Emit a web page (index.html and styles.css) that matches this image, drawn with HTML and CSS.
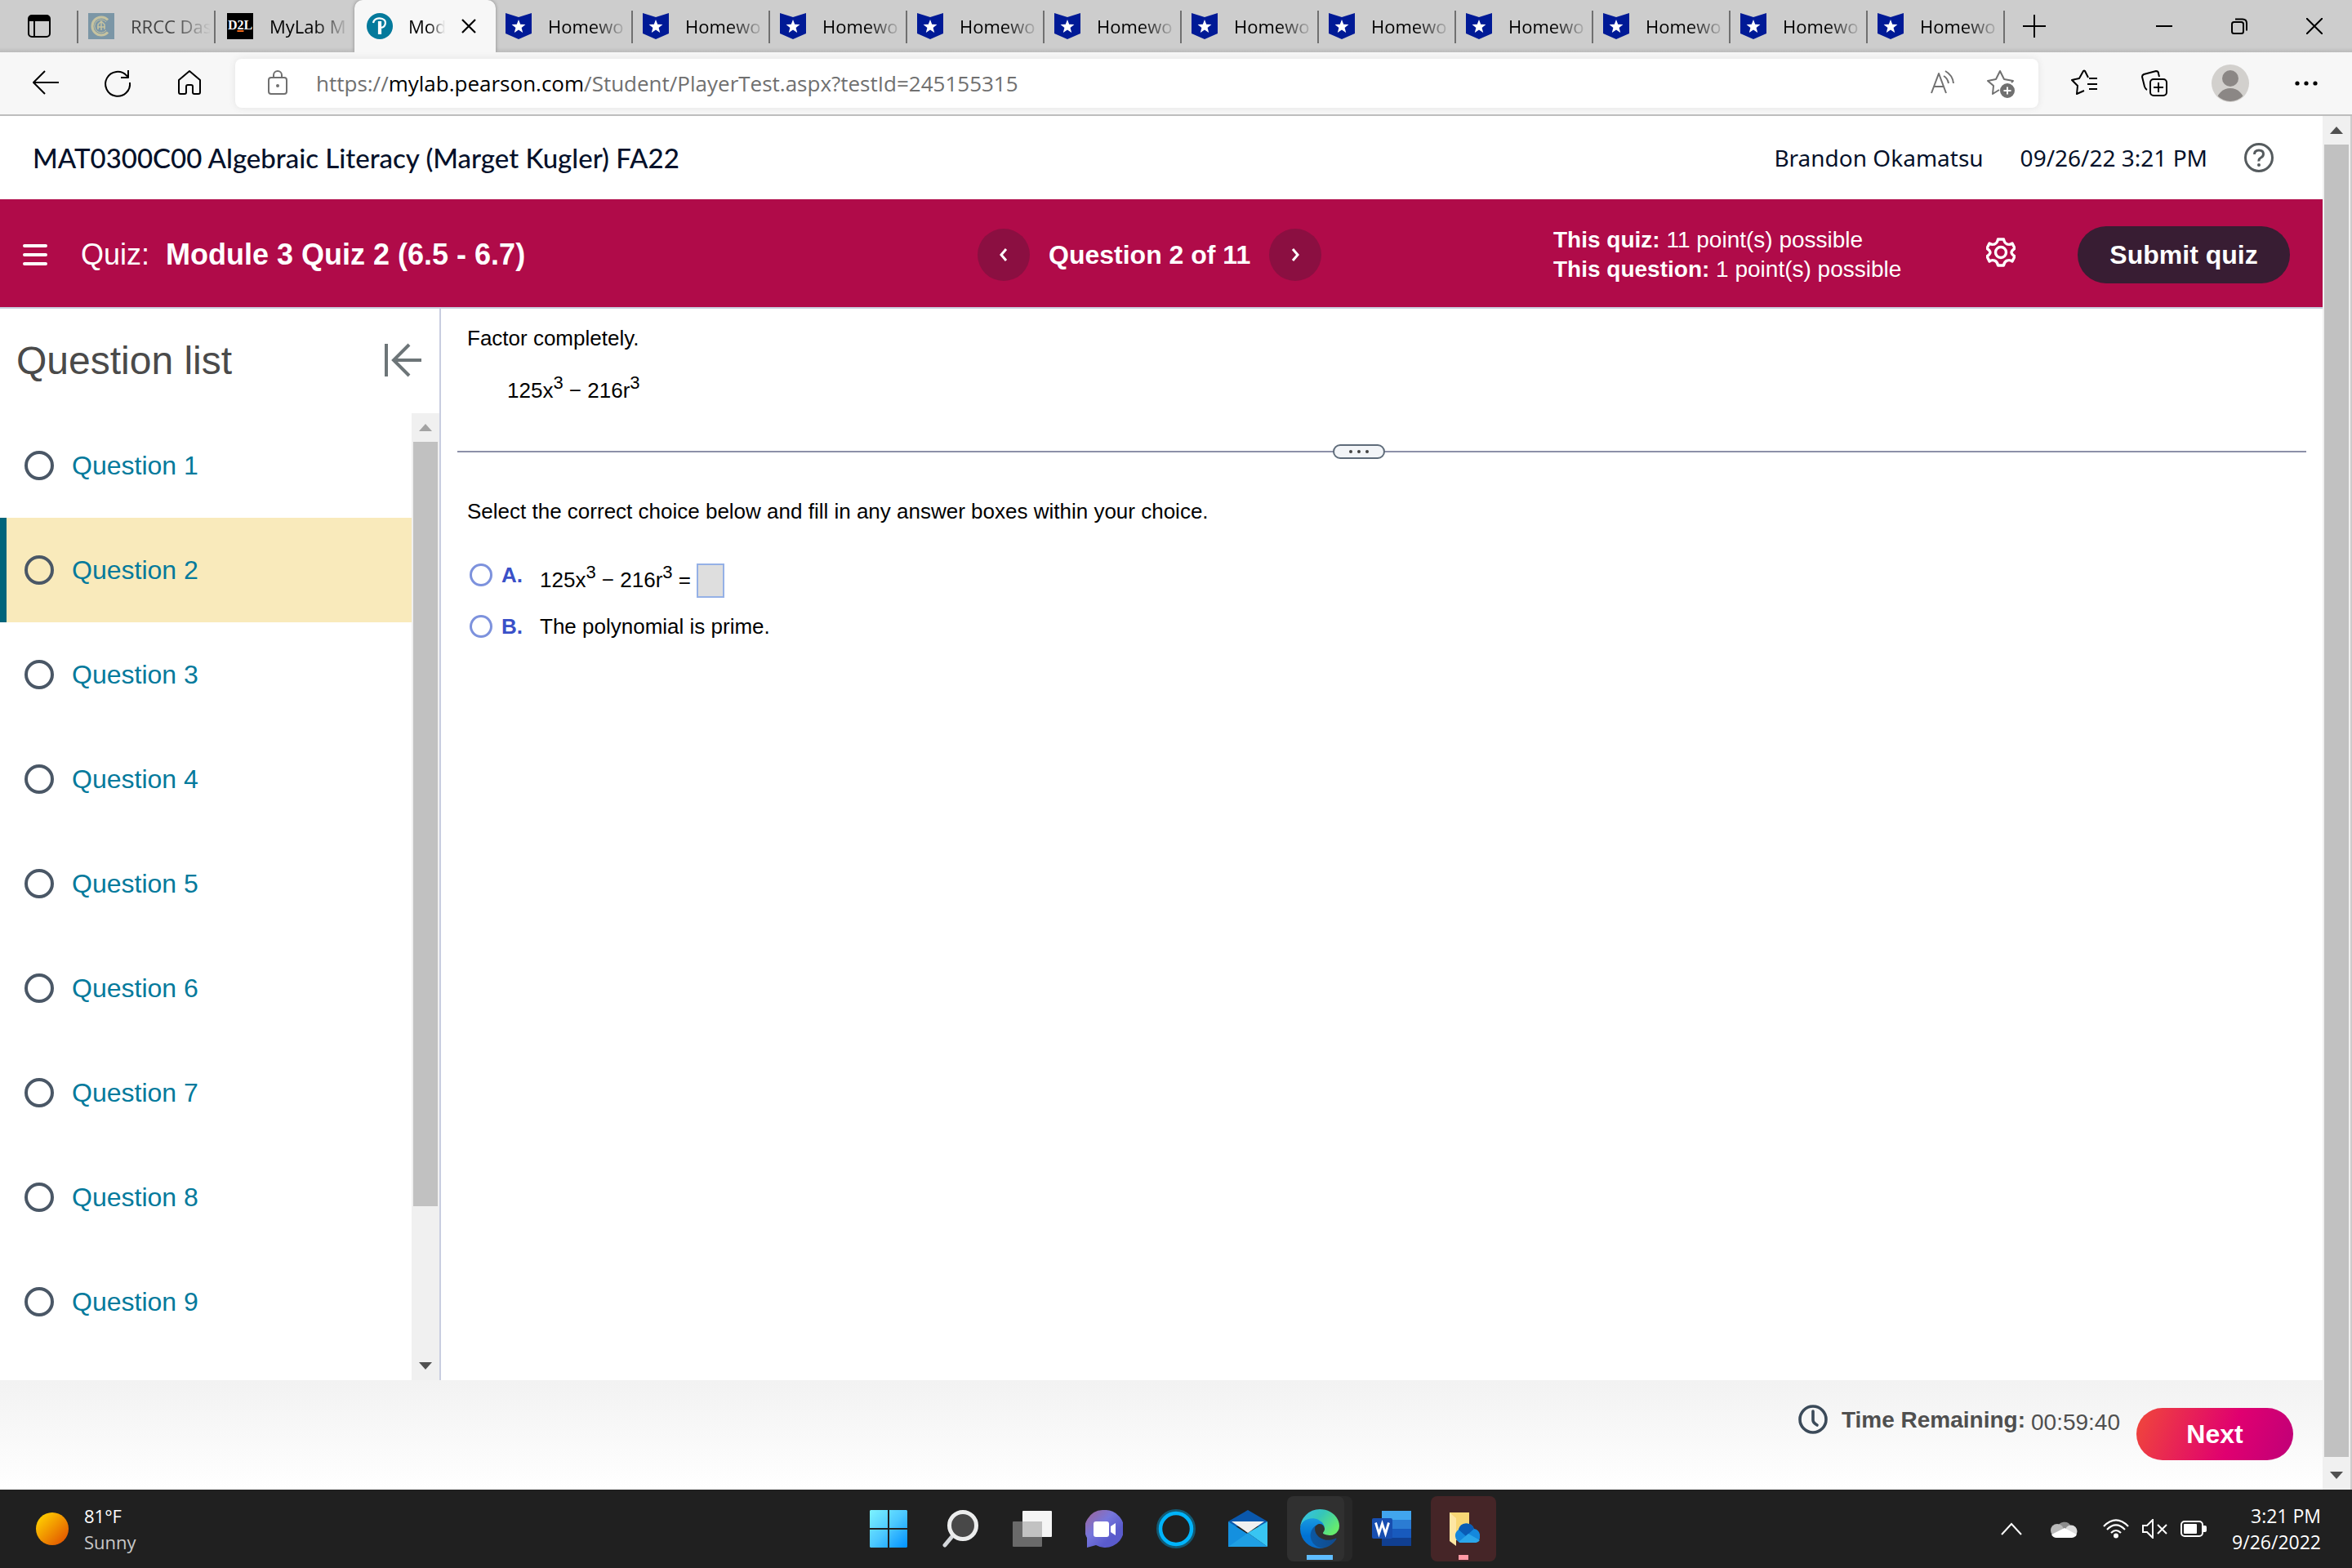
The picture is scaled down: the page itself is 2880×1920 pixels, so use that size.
FILE: index.html
```html
<!DOCTYPE html>
<html lang="en">
<head>
<meta charset="utf-8">
<title>Module 3 Quiz 2 (6.5 - 6.7)</title>
<link rel="stylesheet" href="styles.css">
</head>
<body>
<svg class="defs" aria-hidden="true">
  <symbol id="badge" viewBox="0 0 32 32"><path d="M0 0L16 5L32 0V25L16 32L0 25Z" fill="#001a96"/><path d="M16 8l2.200 5.800 6.200.3-4.800 3.900 1.600 6-5.200-3.400-5.200 3.400 1.600-6-4.800-3.900 6.200-.3z" fill="#fff"/></symbol>
  <symbol id="up" viewBox="0 0 16 9"><path d="M8 0L16 9H0Z" fill="currentColor"/></symbol>
  <symbol id="down" viewBox="0 0 16 9"><path d="M0 0H16L8 9Z" fill="currentColor"/></symbol>
  <symbol id="ring" viewBox="0 0 36 36"><circle cx="18" cy="18" r="16" fill="none" stroke="#4a5766" stroke-width="4"/></symbol>
</svg>

<header class="tabbar">
  <button class="tab-menu" aria-label="Tab actions"><svg width="28" height="28" viewBox="0 0 28 28"><rect x="1" y="1" width="26" height="26" rx="4" fill="none" stroke="#000" stroke-width="2"/><path d="M1 8V5q0-4 4-4h18q4 0 4 4v3z"/><path d="M8 8v19" stroke="#000" stroke-width="2"/></svg></button>
  <nav class="tabs" aria-label="Tabs">
    <a href="#" class="tab dim"><svg class="fav" viewBox="0 0 32 32"><rect width="32" height="32" fill="#7b96a6"/><g fill="none" stroke="#c6c3a0"><path d="M24 8.500A11 11 0 1 0 24 23.500" stroke-width="3"/><path d="M22 11A8 8 0 1 0 22 21" stroke-width="1"/><path d="M12 20v-6l4-4 4 4v6M16 11v10M11 17h10" stroke-width="1.500"/></g></svg><span>RRCC Das</span></a>
    <a href="#" class="tab"><span class="d2l">D<u>2</u>L</span><span>MyLab M</span></a>
    <a href="#" class="tab active"><svg class="fav" viewBox="0 0 32 32"><circle cx="16" cy="16" r="16" fill="#047a9c"/><path d="M8 12C9 7 14 5.500 19 7c6 2 5 11-3 11M15 10v16M17 10v16" fill="none" stroke="#fff" stroke-width="2.200"/></svg><span>Mod</span><svg class="close" width="18" height="18" viewBox="0 0 18 18"><path d="M1 1L17 17M17 1L1 17" stroke="#000" stroke-width="2.200"/></svg></a>
    <a href="#" class="tab"><svg class="fav"><use href="#badge"/></svg><span>Homewo</span></a>
    <a href="#" class="tab"><svg class="fav"><use href="#badge"/></svg><span>Homewo</span></a>
    <a href="#" class="tab"><svg class="fav"><use href="#badge"/></svg><span>Homewo</span></a>
    <a href="#" class="tab"><svg class="fav"><use href="#badge"/></svg><span>Homewo</span></a>
    <a href="#" class="tab"><svg class="fav"><use href="#badge"/></svg><span>Homewo</span></a>
    <a href="#" class="tab"><svg class="fav"><use href="#badge"/></svg><span>Homewo</span></a>
    <a href="#" class="tab"><svg class="fav"><use href="#badge"/></svg><span>Homewo</span></a>
    <a href="#" class="tab"><svg class="fav"><use href="#badge"/></svg><span>Homewo</span></a>
    <a href="#" class="tab"><svg class="fav"><use href="#badge"/></svg><span>Homewo</span></a>
    <a href="#" class="tab"><svg class="fav"><use href="#badge"/></svg><span>Homewo</span></a>
    <a href="#" class="tab"><svg class="fav"><use href="#badge"/></svg><span>Homewo</span></a>
  </nav>
  <button class="new-tab" aria-label="New tab"><svg width="28" height="28" viewBox="0 0 28 28"><path d="M0 14H28M14 0V28" stroke="#000" stroke-width="2"/></svg></button>
  <div class="window-controls">
    <button aria-label="Minimize"><svg width="20" height="20" viewBox="0 0 20 20"><path d="M0 10H20" stroke="#000" stroke-width="2"/></svg></button>
    <button aria-label="Restore"><svg width="20" height="20" viewBox="0 0 20 20"><g fill="none" stroke="#000" stroke-width="2"><rect x="1" y="5" width="14" height="14" rx="2.500"/><path d="M5 1.500h9q5 0 5 5v9"/></g></svg></button>
    <button aria-label="Close"><svg width="20" height="20" viewBox="0 0 20 20"><path d="M0 0L20 20M20 0L0 20" stroke="#000" stroke-width="2"/></svg></button>
  </div>
</header>

<div class="toolbar">
  <div class="nav-buttons">
    <button aria-label="Back"><svg class="ic" viewBox="0 0 32 32"><path d="M32 15H1M15 1L1 15L15 29"/></svg></button>
    <button aria-label="Refresh"><svg class="ic" viewBox="0 0 32 32"><path d="M31 15a15 15 0 1 1-4-8.500L29 9M29 0v9h-9"/></svg></button>
    <button aria-label="Home"><svg class="ic" viewBox="0 0 32 32"><path d="M16 1L29 12v15q0 2-2 2h-5q-2 0-2-2v-7q0-2-2-2h-4q-2 0-2 2v7q0 2-2 2H5q-2 0-2-2V12z"/></svg></button>
  </div>
  <div class="address">
    <svg class="ic grey" viewBox="0 0 32 32"><rect x="5" y="9" width="22" height="20" rx="3"/><path d="M11 9V6a5 5 0 0 1 10 0v3"/><circle cx="16" cy="19" r="1" fill="#666"/></svg>
    <div class="url" role="textbox" aria-label="Address">https://<b>mylab.pearson.com</b>/Student/PlayerTest.aspx?testId=245155315</div>
    <button aria-label="Read aloud"><svg class="ic grey" viewBox="0 0 32 32"><path d="M3 28L12 4L21 28M6 20h12M18 7q5 3 6 9M20 1q9 5 10 15"/></svg></button>
    <button aria-label="Add to favorites"><svg class="ic grey" viewBox="0 0 32 32"><path d="M14 24l-8 5 1-10-7-6 10-2 5-10 5 10 11 2-2 2"/><circle cx="24" cy="25" r="8" fill="#707070"/><path d="M24 20.500v9M19.500 25h9" stroke="#fff"/></svg></button>
  </div>
  <div class="tools">
    <button aria-label="Favorites"><svg class="ic" viewBox="0 0 32 32"><path d="M16 25l-9 4 1-10-7-7 9-2 5-9q1-1 2 0l4 8M22 10h10M20 17h12M22 23h10"/></svg></button>
    <button aria-label="Collections"><svg class="ic" viewBox="0 0 32 32"><rect x="11" y="11" width="20" height="20" rx="4"/><path d="M21 15v12M15 21h12M7 24q-2-1-3-4L1 8q0-2 2-3L18 1q3 0 3 3l1 4"/></svg></button>
    <button aria-label="Profile"><svg width="46" height="46" viewBox="0 0 46 46"><clipPath id="av"><circle cx="23" cy="23" r="22"/></clipPath><circle cx="23" cy="23" r="23" fill="#d2d0cd"/><g clip-path="url(#av)" fill="#8b8785"><circle cx="23" cy="17" r="10"/><circle cx="23" cy="46" r="17"/></g></svg></button>
    <button aria-label="More"><svg class="ic" viewBox="0 0 32 32"><g fill="#000" stroke="none"><circle cx="5" cy="16" r="2.600"/><circle cx="16" cy="16" r="2.600"/><circle cx="27" cy="16" r="2.600"/></g></svg></button>
  </div>
</div>

<div class="viewport">
  <div class="page">
    <div class="course">
      <h1>MAT0300C00 Algebraic Literacy (Marget Kugler) FA22</h1>
      <span>Brandon Okamatsu</span>
      <span>09/26/22 3:21 PM</span>
      <button aria-label="Help"><svg width="36" height="36" viewBox="0 0 36 36"><g fill="none" stroke="#555b5e" stroke-width="3"><circle cx="18" cy="18" r="16.500"/><path d="M12.500 14q0-5 5.500-5t5.500 4.500q0 3-3 4.500t-2.500 4.500"/></g><circle cx="18" cy="27" r="2" fill="#555b5e"/></svg></button>
    </div>

    <div class="banner">
      <div class="quiz-name">
        <button aria-label="Menu"><svg width="30" height="26" viewBox="0 0 30 26"><path d="M2 2H28M2 13H28M2 24H28" stroke="#fff" stroke-width="4" stroke-linecap="round"/></svg></button>
        <p>Quiz:&nbsp; <b>Module 3 Quiz 2 (6.5 - 6.7)</b></p>
      </div>
      <div class="pager">
        <button aria-label="Previous question"><svg width="10" height="16" viewBox="0 0 10 16"><path d="M8 1L2 8L8 15" fill="none" stroke="#fff" stroke-width="3"/></svg></button>
        <b>Question 2 of 11</b>
        <button aria-label="Next question"><svg width="10" height="16" viewBox="0 0 10 16"><path d="M2 1L8 8L2 15" fill="none" stroke="#fff" stroke-width="3"/></svg></button>
      </div>
      <div class="banner-end">
        <div class="points"><p><b>This quiz:</b> 11 point(s) possible</p><p><b>This question:</b> 1 point(s) possible</p></div>
        <button class="gear" aria-label="Settings"><svg width="36" height="36" viewBox="0 0 36 36"><g fill="none" stroke="#fff" stroke-width="3.400" stroke-linejoin="round"><path d="M14.500 2h7q1 5 4.500 6 3 1 6-1l3 6q-4 3-4 5t4 5l-3 6q-3-2-6-1-3.500 1-4.500 6h-7q-1-5-4.500-6-3-1-6 1l-3-6q4-3 4-5t-4-5l3-6q3 2 6 1 3.500-1 4.500-6z"/><circle cx="18" cy="18" r="6.500"/></g></svg></button>
        <button class="submit">Submit quiz</button>
      </div>
    </div>

    <div class="work">
      <aside class="sidebar">
        <div class="side-head"><h2>Question list</h2><button aria-label="Collapse list"><svg width="46" height="42" viewBox="0 0 46 42"><path d="M3 1V41M46 21H12M31 2L12 21L31 40" fill="none" stroke="#6d7578" stroke-width="4"/></svg></button></div>
        <div class="side-scroll">
          <ul>
            <li><a href="#"><svg class="ring"><use href="#ring"/></svg>Question 1</a></li>
            <li><a href="#" class="current"><svg class="ring"><use href="#ring"/></svg>Question 2</a></li>
            <li><a href="#"><svg class="ring"><use href="#ring"/></svg>Question 3</a></li>
            <li><a href="#"><svg class="ring"><use href="#ring"/></svg>Question 4</a></li>
            <li><a href="#"><svg class="ring"><use href="#ring"/></svg>Question 5</a></li>
            <li><a href="#"><svg class="ring"><use href="#ring"/></svg>Question 6</a></li>
            <li><a href="#"><svg class="ring"><use href="#ring"/></svg>Question 7</a></li>
            <li><a href="#"><svg class="ring"><use href="#ring"/></svg>Question 8</a></li>
            <li><a href="#"><svg class="ring"><use href="#ring"/></svg>Question 9</a></li>
          </ul>
          <div class="scrollbar side-bar"><svg class="arrow off"><use href="#up"/></svg><div class="track"><div class="thumb"></div></div><svg class="arrow"><use href="#down"/></svg></div>
        </div>
      </aside>

      <main class="question">
        <p>Factor completely.</p>
        <p class="math prompt">125x<sup>3</sup> − 216r<sup>3</sup></p>
        <div class="divider"><button aria-label="Resize"><svg width="26" height="6" viewBox="0 0 26 6"><g fill="#444"><circle cx="3" cy="3" r="2"/><circle cx="13" cy="3" r="2"/><circle cx="23" cy="3" r="2"/></g></svg></button></div>
        <p>Select the correct choice below and fill in any answer boxes within your choice.</p>
        <div class="choices">
          <div class="choice"><input type="radio" name="choice" id="a"><label for="a"><b>A.</b></label><span class="math">125x<sup>3</sup> − 216r<sup>3</sup> =</span><input type="text" class="answer" aria-label="Answer for choice A"></div>
          <div class="choice"><input type="radio" name="choice" id="b"><label for="b"><b>B.</b>The polynomial is prime.</label></div>
        </div>
      </main>
    </div>

    <footer class="quiz-foot">
      <svg width="36" height="36" viewBox="0 0 36 36"><g fill="none" stroke="#3b4a59" stroke-width="3.600"><circle cx="18" cy="18" r="16"/><path d="M18 8v11q0 3 5 6" stroke-linecap="round"/></g></svg>
      <b>Time Remaining:</b>
      <span>00:59:40</span>
      <button>Next</button>
    </footer>
  </div>
  <div class="scrollbar page-bar"><svg class="arrow"><use href="#up"/></svg><div class="track"><div class="thumb"></div></div><svg class="arrow"><use href="#down"/></svg></div>
</div>

<div class="taskbar">
  <div class="weather">
    <svg width="40" height="40" viewBox="0 0 40 40"><defs><linearGradient id="sun" x1="0" y1="0" x2="1" y2="1"><stop offset=".1" stop-color="#ffd000"/><stop offset=".9" stop-color="#e25600"/></linearGradient></defs><circle cx="20" cy="20" r="20" fill="url(#sun)"/></svg>
    <p>81°F<br><span>Sunny</span></p>
  </div>
  <div class="apps">
    <button aria-label="Start"><svg width="46" height="46" viewBox="0 0 46 46"><defs><linearGradient id="win" x1="0" y1="0" x2="1" y2="1"><stop stop-color="#7df3ff"/><stop offset=".5" stop-color="#4cc8ff"/><stop offset="1" stop-color="#0091ff"/></linearGradient></defs><path d="M1 0H22V22H0V1zM24 0H45L46 1V22H24zM0 24H22V46H1L0 45zM24 24H46V45L45 46H24z" fill="url(#win)"/></svg></button>
    <button aria-label="Search"><svg width="46" height="46" viewBox="0 0 46 46"><path d="M14 31L4 43" stroke="#d4d7db" stroke-width="5" stroke-linecap="round"/><circle cx="26" cy="19" r="16.500" fill="#484848" stroke="#eceded" stroke-width="5"/></svg></button>
    <button aria-label="Task view"><svg width="48" height="46" viewBox="0 0 48 46"><rect y="14" width="36" height="31" rx="1" fill="#6a6a6a"/><rect x="12" y="1" width="36" height="32" rx="1" fill="#f5f5f5"/><rect x="12" y="14" width="24" height="19" fill="#c2c2c2"/></svg></button>
    <button aria-label="Chat"><svg width="46" height="46" viewBox="0 0 46 46"><defs><linearGradient id="chat" x1="0" y1="0" x2="1" y2="1"><stop offset=".1" stop-color="#9768a4"/><stop offset=".4" stop-color="#7676dc"/><stop offset=".7" stop-color="#5a5bcc"/></linearGradient></defs><path d="M23 0A23 23 0 1 1 13 43L2 46V34A23 23 0 0 1 23 0z" fill="url(#chat)"/><rect x="10" y="14" width="19" height="19" rx="3" fill="#fff"/><path d="M31 20L37 16V31L31 27z" fill="#fff"/></svg></button>
    <button aria-label="Cortana"><svg width="48" height="48" viewBox="0 0 48 48"><circle cx="24" cy="24" r="22" fill="none" stroke="#135a74" stroke-width="4"/><circle cx="24" cy="24" r="19" fill="none" stroke="#00b4fb" stroke-width="4.500"/></svg></button>
    <button aria-label="Mail"><svg width="48" height="46" viewBox="0 0 48 46"><path d="M0 14L24 0L48 14L40 20H8z" fill="#0a58ad"/><path d="M0 14L48 45H0z" fill="#1490df"/><path d="M48 14V45L24 28z" fill="#38c5f2"/><path d="M24 28L48 45H0z" fill="#1f9fe4"/><path d="M4 14H44L24 28z" fill="#f0f0f0"/></svg></button>
    <button class="edge" aria-label="Edge"><svg width="48" height="48" viewBox="0 0 256 256"><defs><linearGradient id="e1" x1="0" x2="1"><stop stop-color="#0c59a4"/><stop offset="1" stop-color="#114a8b"/></linearGradient><linearGradient id="e2" x1="0" y1="0" x2="0" y2="1"><stop stop-color="#1b9de2"/><stop offset=".6" stop-color="#0073d5"/><stop offset="1" stop-color="#0a6cc8"/></linearGradient><linearGradient id="e3" x1="0" y1="0" x2="1" y2=".6"><stop stop-color="#35c1f1"/><stop offset=".5" stop-color="#36c6b8"/><stop offset="1" stop-color="#66eb6e"/></linearGradient></defs><path fill="url(#e1)" d="M231 190.500c-3.400 1.800-6.900 3.400-10.500 4.700a101.700 101.700 0 0 1-35.900 6.500c-47.300 0-88.500-32.500-88.500-74.300a31.500 31.500 0 0 1 16.400-27.300c-42.800 1.800-53.800 46.400-53.800 72.500 0 74 68.100 81.400 82.800 81.400 7.900 0 19.800-2.300 27-4.600l1.300-.4a128.300 128.300 0 0 0 66.600-52.800 4 4 0 0 0-5.400-5.700z"/><path fill="url(#e2)" d="M105.700 241.400a79.200 79.200 0 0 1-22.700-21.300 80.700 80.700 0 0 1 29.500-120c3.200-1.500 8.500-4.100 15.600-4a32.400 32.400 0 0 1 25.700 13 31.900 31.900 0 0 1 6.300 18.700c0-.2 24.500-79.600-80-79.600-43.900 0-80 41.600-80 78.200a130.200 130.200 0 0 0 12.100 56 128 128 0 0 0 156.400 67 75.500 75.500 0 0 1-62.800-8z"/><path fill="url(#e3)" d="M152.300 148.900c-.9 1-3.400 2.500-3.400 5.600 0 2.600 1.700 5.200 4.800 7.300 14.300 10 41.400 8.600 41.500 8.600a59.600 59.600 0 0 0 30.300-8.300 61.400 61.400 0 0 0 30.400-52.900c.3-22.400-8-37.300-11.300-43.900C223.500 23.900 177.700 0 128 0A128 128 0 0 0 0 126.200c.5-36.500 36.800-66 80-66 3.500 0 23.500.3 42 10a72.600 72.600 0 0 1 30.900 29.300c6.100 10.600 7.200 24.100 7.200 29.500s-2.700 13.300-7.800 19.900z"/></svg></button>
    <button aria-label="Word"><svg width="48" height="44" viewBox="0 0 48 44"><path d="M12 0H48V11H12z" fill="#41a5ee"/><path d="M12 11H48V22H12z" fill="#2b7cd3"/><path d="M12 22H48V33H12z" fill="#185abd"/><path d="M12 33H48V43H12z" fill="#103f91"/><rect y="9" width="25" height="25" rx="2" fill="#174eb0"/><path d="M4.500 14.500L8.500 28L12.500 15.500L16.500 28L20.500 14.500" fill="none" stroke="#fff" stroke-width="2.800"/></svg></button>
    <button class="files" aria-label="File Explorer"><svg width="40" height="44" viewBox="0 0 40 44"><path d="M3 2H27V36H3z" fill="#f8d775"/><path d="M3 2L11 9V43L3 37z" fill="#fde6a3"/><path d="M16 39A9 9 0 0 1 14 23A10 10 0 0 1 33 22A9 9 0 0 1 35 39z" fill="#1488dd"/><path d="M14 23A10 10 0 0 1 33 22L23 31z" fill="#0a5cb5"/><path d="M14 38L26 28L40 36Q38 39 35 39H16z" fill="#2aa6ea"/></svg></button>
  </div>
  <div class="tray">
    <svg width="28" height="16" viewBox="0 0 28 16"><path d="M2 15L14 2L26 15" fill="none" stroke="#fff" stroke-width="2"/></svg>
    <svg class="cloud" width="34" height="22" viewBox="0 0 34 22"><path d="M9 10A9 9 0 0 1 26 8L17 14z" fill="#8c8c8c"/><circle cx="9" cy="13" r="8" fill="#b9b9b9"/><circle cx="26" cy="14" r="7.500" fill="#dcdcdc"/><path d="M2 18L18 10L33 18Q31 22 27 22H8Q4 22 2 18z" fill="#fff"/></svg>
    <svg width="32" height="24" viewBox="0 0 32 24"><g fill="none" stroke="#fff" stroke-width="2.200"><path d="M1 9Q16-6 31 9M5 13Q16 2 27 13M10 17Q16 11 22 17"/></g><circle cx="16" cy="20.500" r="3" fill="#fff"/></svg>
    <svg width="32" height="24" viewBox="0 0 32 24"><g fill="none" stroke="#fff" stroke-width="2"><path d="M2 8H7L14 1V23L7 16H2zM20 7L31 18M31 7L20 18"/></g></svg>
    <svg width="34" height="20" viewBox="0 0 34 20"><rect x="2" y="1" width="26" height="18" rx="4" fill="none" stroke="#fff" stroke-width="2"/><rect x="5" y="4" width="16" height="12" rx="1" fill="#fff"/><path d="M29 6h2q2 0 2 2v4q0 2-2 2h-2z" fill="#fff"/></svg>
    <p>3:21 PM<br>9/26/2022</p>
  </div>
</div>
</body>
</html>
```
FILE: styles.css
```css
* { box-sizing: border-box; margin: 0; padding: 0; }
html { font-family: "Liberation Sans", Arial, sans-serif; }
body { display: flex; flex-direction: column; min-height: 100vh; background: #fff; color: #000; }
button { border: 0; background: none; font: inherit; color: inherit; display: flex; align-items: center; justify-content: center; }
a { color: inherit; text-decoration: none; }
svg { display: block; flex: none; }
.defs { position: absolute; width: 0; height: 0; }

/* browser tabs */
.tabbar { display: flex; height: 64px; background: linear-gradient(#cdcdcd 58px, #bbb); font-family: "Open Sans", sans-serif; font-size: 22px; }
.tab-menu { width: 94px; padding-left: 2px; padding-right: 0; }
.tabs { display: flex; }
.tab { display: flex; align-items: center; gap: 20px; width: 168px; padding-left: 12px;
  background: linear-gradient(#707070, #707070) right 13px / 2px 40px no-repeat; }
.tab:first-child { width: 170px; padding-left: 14px; background: linear-gradient(#707070, #707070) left 13px / 2px 40px no-repeat, linear-gradient(#707070, #707070) right 13px / 2px 40px no-repeat; }
.tab:nth-child(2) { width: 170px; padding-left: 14px; background: none; }
.tab.active { width: 173px; padding-left: 15px; background: #f7f7f7; border-radius: 10px 10px 0 0; box-shadow: 0 0 4px #888; gap: 19px; }
.fav { width: 32px; height: 32px; }
.tab > span:last-of-type { flex: 0 0 100px; white-space: nowrap; mask-image: linear-gradient(90deg, #000 55%, transparent 98%); }
.tab.active > span:last-of-type { flex: 0 0 46px; }
.tab.dim { color: #444; }
.tab .d2l { flex: 0 0 32px; height: 32px; background: #000; color: #fff; font: bold 16px/30px "Liberation Serif", serif; text-align: center; }
.d2l u { text-decoration-color: #f26b1d; text-decoration-thickness: 2px; }
.new-tab { width: 72px; margin-right: auto; }
.window-controls { display: flex; }
.window-controls button { width: 92px; }

/* browser toolbar */
.toolbar { display: flex; align-items: center; gap: 40px; height: 78px; padding: 0 40px; background: #f7f7f7; border-bottom: 2px solid #bdbdbd; }
.ic { width: 32px; height: 32px; fill: none; stroke: #000; stroke-width: 2; stroke-linejoin: round; overflow: visible; }
.ic.grey { stroke: #707070; }
.nav-buttons { display: flex; gap: 56px; }
.address { flex: 1; display: flex; align-items: center; gap: 40px; height: 60px; padding: 0 30px 0 36px; background: #fff; border-radius: 8px; box-shadow: 0 0 8px #e2e2e2; }
.url { flex: 1; margin-left: -9px; color: #707070; font: 26px/36px "Open Sans", sans-serif; white-space: nowrap; }
.url b { font-weight: 400; color: #000; }
.tools { display: flex; align-items: center; gap: 54px; }

/* page frame */
.viewport { flex: 1; display: flex; }
.page { flex: 1; display: flex; flex-direction: column; min-width: 0; }
.scrollbar { display: flex; flex-direction: column; width: 36px; background: #f0f0f0; padding: 0 4px 0 2px; }
.page-bar { border-right: 2px solid #ccc; padding-right: 2px; }
.arrow { width: 16px; height: 9px; margin: 13px auto; color: #505050; }
.arrow.off { color: #a3a3a3; }
.track { flex: 1; display: grid; grid-template-rows: 997fr 3fr; }
.thumb { background: #c1c1c1; }

.course { display: flex; align-items: center; height: 102px; padding: 0 60px 0 40px; color: #05112a; font: 28px/40px "Noto Sans", sans-serif; }
.course h1 { flex: 1; font: 500 33px/40px Lato, sans-serif; }
.course span { margin-right: 45px; }

.banner { display: grid; grid-template-columns: 1197fr 705fr 942fr; align-items: center; height: 134px; padding-top: 4px; background: #b00b49; border-bottom: 2px solid #c9cedd; color: #fff; }
.quiz-name { display: flex; align-items: center; gap: 41px; padding-left: 28px; font-size: 36px; line-height: 40px; }
.pager { display: flex; align-items: center; gap: 23px; font-size: 32px; }
.pager button { width: 64px; height: 64px; border-radius: 50%; background: #8b0f41; }
.banner-end { display: flex; align-items: center; padding-right: 40px; }
.points { flex: 1; font-size: 28px; line-height: 36px; }
.gear { margin: 0 76px 6px 0; }
.submit { width: 260px; height: 70px; border-radius: 35px; background: #381d33; font-size: 32px; font-weight: 700; }

.work { flex: 1; display: grid; grid-template-columns: 540px 1fr; }
.sidebar { display: flex; flex-direction: column; border-right: 2px solid #c8cde0; }
.side-head { display: flex; align-items: center; justify-content: space-between; height: 128px; padding: 0 22px 2px 20px; }
.side-head h2 { font-size: 48px; font-weight: 400; color: #4a4a4a; }
.side-scroll { flex: 1; display: flex; }
.side-scroll ul { flex: 1; list-style: none; }
.side-scroll a { display: flex; align-items: center; gap: 22px; height: 128px; padding-left: 30px; color: #047a9c; font-size: 32px; }
.side-scroll a.current { padding-left: 22px; border-left: 8px solid #00657b; background: #f9eabb; }
.ring { width: 36px; height: 36px; }
.side-bar { width: 34px; padding: 0 2px; }
.side-bar .track { grid-template-rows: 84fr 16fr; }

.question { padding: 20px; font-size: 26px; line-height: 32px; }
.question > p { padding-left: 12px; }
.question > .prompt { padding-left: 61px; margin-top: 32px; }
.math sup { font-size: 22px; line-height: 0; vertical-align: 11px; }
.divider { display: flex; justify-content: center; height: 18px; margin: 50px 0 48px; padding-right: 56px; background: linear-gradient(#8c90a8, #8c90a8) 0 8px / 100% 2px no-repeat; }
.divider button { width: 64px; height: 18px; border: 2px solid #5f6c7a; border-radius: 9px; background: #f3f5f8; }
.choices { display: flex; flex-direction: column; gap: 21px; margin-top: 48px; padding-left: 15px; }
.choice { display: flex; line-height: 28px; }
.choice input[type="radio"] { appearance: none; width: 28px; height: 28px; margin-right: 11px; border: 3px solid #7d92dd; border-radius: 50%; background: #fff; }
.choice label b { display: inline-block; width: 47px; color: #3a50c8; }
.choice .math { line-height: 40px; }
.answer { width: 34px; height: 42px; margin-left: 7px; border: 2px solid #95b1e6; background: #dedede; }

.quiz-foot { display: flex; align-items: flex-start; height: 134px; padding: 30px 36px 0; background: linear-gradient(#f2f2f2, #fff); justify-content: flex-end; color: #4f4f4f; font-size: 28px; line-height: 38px; }
.quiz-foot b { margin-left: 17px; }
.quiz-foot span { margin: 3px 20px 0 7px; font-size: 28px; }
.quiz-foot button { width: 192px; height: 64px; margin-top: 4px; border-radius: 32px; background: linear-gradient(110deg, #f0483a, #e00070 60%, #bf0078); color: #fff; font-size: 32px; font-weight: 700; }

/* taskbar */
.taskbar { display: grid; grid-template-columns: 1fr auto 1fr; align-items: center; height: 96px; background: #202020; color: #fff; font: 22px/32px "Open Sans", sans-serif; }
.weather { display: flex; align-items: center; gap: 19px; padding-left: 44px; }
.weather span { color: #c8c8c8; }
.apps { display: flex; gap: 8px; }
.apps button { width: 80px; height: 80px; border-radius: 8px; }
.apps .edge { background: linear-gradient(#5fbdff, #5fbdff) 24px 72px / 32px 6px no-repeat, #303030; box-shadow: inset -10px 0 #282828; }
.apps .files { background: linear-gradient(#ff9aa5, #ff9aa5) center 72px / 12px 6px no-repeat, #452527; }
.tray { display: flex; align-items: center; justify-content: flex-end; gap: 15px; padding-right: 38px; }
.tray .cloud { margin: 0 16px 0 18px; }
.tray p { min-width: 124px; text-align: right; font-size: 23px; }
```
